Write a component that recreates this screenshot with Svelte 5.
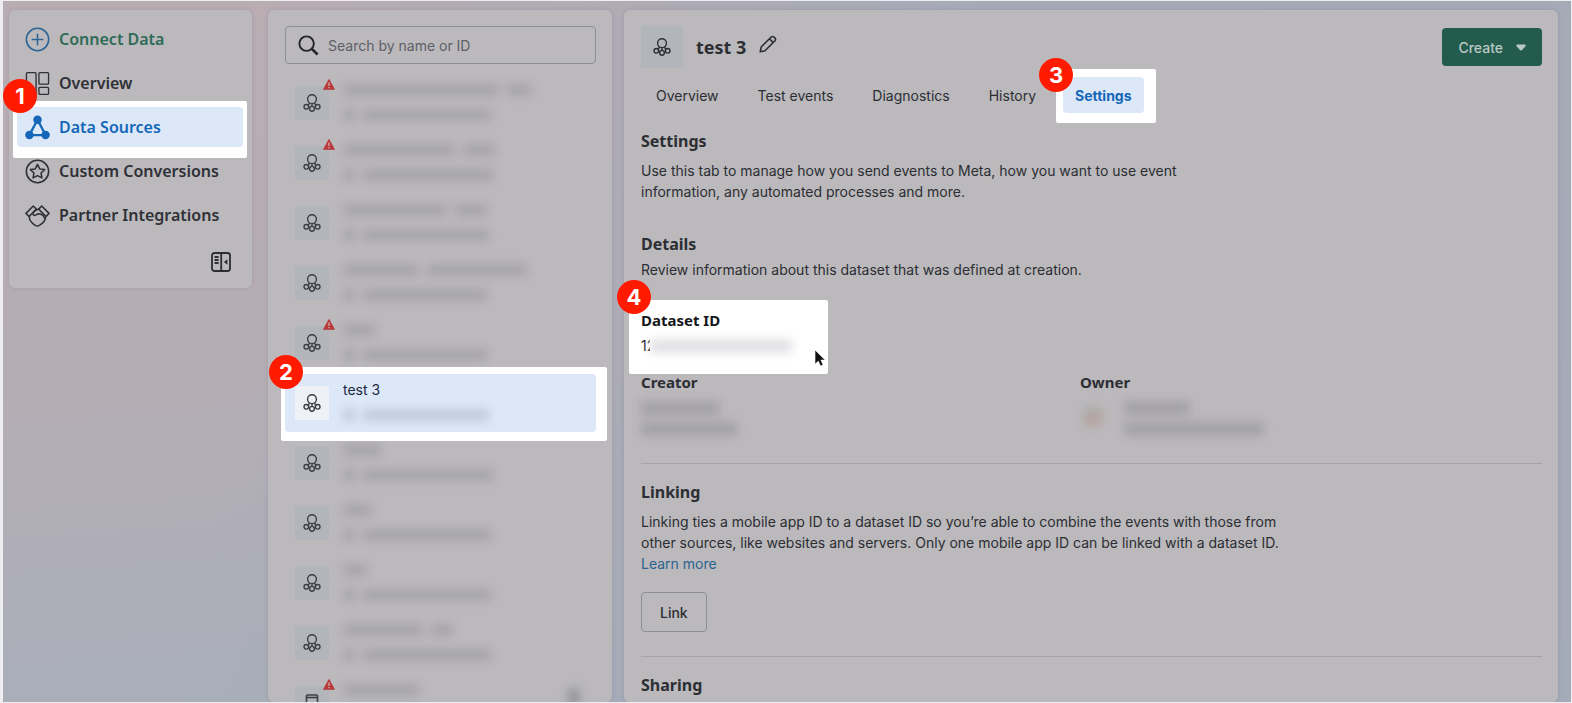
<script>
  let search = $state('');
  let activeTab = $state('Settings');
  let selected = $state(5);

  const tabs = ['Overview', 'Test events', 'Diagnostics', 'History', 'Settings'];

  // Redacted rows only keep the widths of their blurred parts
  const datasets = [
    { warning: true, name: [156, 24], id: [12, 128] },
    { warning: true, name: [112, 32], id: [12, 130] },
    { warning: false, name: [104, 32], id: [12, 126] },
    { warning: false, name: [76, 100], id: [12, 124] },
    { warning: true, name: [32], id: [12, 124] },
    { warning: false, title: 'test 3', id: [12, 126] },
    { warning: false, name: [38], id: [12, 130] },
    { warning: false, name: [28], id: [12, 128] },
    { warning: false, name: [24], id: [12, 128] },
    { warning: false, name: [80, 22], id: [12, 128] },
    { warning: true, app: true, name: [76], id: [12, 128] }
  ];
</script>

{#snippet datasetIcon()}
  <svg class="dataset-icon" viewBox="0 0 18 18" fill="none" stroke="currentColor" stroke-width="1.4">
    <circle cx="9" cy="5.2" r="4.4" />
    <circle cx="3.3" cy="12.8" r="2.3" />
    <circle cx="9" cy="14.8" r="2.4" />
    <circle cx="14.7" cy="12.8" r="2.3" />
    <path d="M6.4 8.8 5.400 11.600M11.600 8.800l1 2.800M9 9.600v2.800" />
  </svg>
{/snippet}

{#snippet blurred(widths)}
  <span class="blurred">
    {#each widths as width}
      <span class="smudge" style="width: {width}px"></span>
    {/each}
  </span>
{/snippet}

<div class="page">
  <nav class="panel sidebar">
    <a class="nav-item connect" href="#connect">
      <svg viewBox="0 0 26 26" fill="none" stroke="#2b6496" stroke-width="1.6">
        <circle cx="13" cy="13" r="11.6" />
        <path d="M13 7v12M7 13h12" />
      </svg>
      Connect Data
    </a>
    <a class="nav-item" href="#overview">
      <svg viewBox="0 0 26 26" fill="none" stroke="currentColor" stroke-width="1.4">
        <rect x="1.5" y="1.7" width="10" height="22.6" rx="1" />
        <rect x="14.5" y="1.7" width="10" height="12" rx="1" />
        <rect x="14.5" y="17" width="10" height="7.3" rx="1" />
      </svg>
      Overview
    </a>
    <a class="nav-item current spotlight" href="#data-sources">
      <span class="badge">1</span>
      <svg viewBox="0 0 26 26" fill="currentColor">
        <path d="M13 5 4.500 21h17z" fill="none" stroke="currentColor" stroke-width="2.400" />
        <circle cx="13" cy="5" r="4.400" />
        <circle cx="4.600" cy="20.800" r="4.400" />
        <circle cx="21.400" cy="20.800" r="4.400" />
      </svg>
      Data Sources
    </a>
    <a class="nav-item" href="#custom-conversions">
      <svg viewBox="0 0 26 26" fill="none" stroke="currentColor" stroke-width="1.6" stroke-linejoin="round">
        <circle cx="13" cy="13" r="11.6" />
        <path d="m13 5.600 2.300 4.700 5.100.7-3.700 3.600.9 5.100-4.600-2.400-4.600 2.400.9-5.100L5.600 11l5.100-.7z" />
      </svg>
      Custom Conversions
    </a>
    <a class="nav-item" href="#partner-integrations">
      <svg viewBox="0 0 26 26" fill="none" stroke="currentColor" stroke-width="1.6" stroke-linejoin="round" stroke-linecap="round">
        <path d="M1 10.800 8.600 3.200l3.200 3.200-7.600 7.600z" />
        <path d="M25 10.800 17.400 3.200l-3.200 3.200 7.600 7.600z" />
        <path d="M14.200 6.400c-2.400.2-4.400 1.400-5.800 3.800-.6 2 .8 3.200 2.600 2.400l2.600-1.400c3 0 5.600 1.600 6.600 4.400" />
        <path d="M4.600 14.200c-.4 3.600 2.200 6.600 6 9 1.400.9 3 .9 4.400 0 4-2.400 6.600-5.400 6.400-9.200" />
      </svg>
      Partner Integrations
    </a>
    <button class="collapse" aria-label="Collapse menu">
      <svg viewBox="0 0 20 20" fill="none" stroke="currentColor" stroke-width="1.8">
        <rect x="1" y="1" width="18" height="18" rx="2.500" />
        <path d="M10.200 1v18M3.600 5h4M3.600 8h4M3.600 11h4" />
        <path d="M16.400 7.200v5.600L12.800 10z" fill="currentColor" stroke="none" />
      </svg>
    </button>
  </nav>

  <section class="panel datasets">
    <label class="search">
      <svg viewBox="0 0 22 22" fill="none" stroke="currentColor" stroke-width="2">
        <circle cx="9" cy="9" r="7.600" />
        <path d="m14.500 14.500 6 6" stroke-width="2.800" />
      </svg>
      <input type="text" placeholder="Search by name or ID" aria-label="Search by name or ID" bind:value={search} />
    </label>

    <div class="rows">
      {#each datasets as dataset, i}
        <button
          class="row {selected === i ? 'selected' : ''} {i === 5 ? 'spotlight' : ''}"
          aria-label={dataset.title ?? 'Dataset'}
          onclick={() => (selected = i)}
        >
          {#if i === 5}
            <span class="badge">2</span>
          {/if}
          <span class="tile">
            {#if dataset.app}
              <svg class="dataset-icon" viewBox="0 0 18 18" fill="none" stroke="currentColor" stroke-width="1.6">
                <rect x="3.500" y="1" width="11" height="16" rx="1" />
                <path d="M3.500 3.500h11" />
              </svg>
            {:else}
              {@render datasetIcon()}
            {/if}
            {#if dataset.warning}
              <svg class="warning" viewBox="0 0 12 11">
                <path d="M6 .8 11.200 10.200H.8z" fill="#b93a3c" stroke="#b93a3c" stroke-width="1.200" stroke-linejoin="round" />
                <path d="M6 3.600v3.400M6 8v1.200" stroke="#d8b4b5" stroke-width="1.200" />
              </svg>
            {/if}
          </span>
          <span class="row-text">
            {#if dataset.title}
              <span class="row-title">{dataset.title}</span>
            {:else}
              {@render blurred(dataset.name)}
            {/if}
            {@render blurred(dataset.id)}
          </span>
          {#if dataset.app}
            <span class="row-extra"></span>
          {/if}
        </button>
      {/each}
    </div>
  </section>

  <main class="panel main">
    <header class="header">
      <span class="tile large">{@render datasetIcon()}</span>
      <h1>test 3</h1>
      <button class="edit" aria-label="Edit name">
        <svg viewBox="0 0 18 18" fill="none" stroke="currentColor" stroke-width="1.6" stroke-linejoin="round">
          <path d="M1.200 16.800 2.200 12 12.200 2a1.900 1.900 0 0 1 2.700 0l1.100 1.100a1.900 1.900 0 0 1 0 2.700L6 15.800z" />
          <path d="m10.400 3.800 3.800 3.800" />
        </svg>
      </button>
      <button class="create">
        Create
        <svg viewBox="0 0 10 7" fill="currentColor">
          <path d="M1.500.5h7c1.200 0 1.500 1.200.8 2L5.800 6.200a1.100 1.100 0 0 1-1.600 0L.7 2.500C0 1.700.3.500 1.500.5z" />
        </svg>
      </button>
    </header>

    <nav class="tabs">
      {#each tabs as tab}
        <button
          class="tab {activeTab === tab ? 'active' : ''} {tab === 'Settings' ? 'spotlight' : ''}"
          onclick={() => (activeTab = tab)}
        >
          {#if tab === 'Settings'}
            <span class="badge">3</span>
          {/if}
          {tab}
        </button>
      {/each}
    </nav>

    <section class="intro">
      <h2>Settings</h2>
      <p>Use this tab to manage how you send events to Meta, how you want to use event information, any automated processes and more.</p>
    </section>

    <section class="details">
      <h2>Details</h2>
      <p>Review information about this dataset that was defined at creation.</p>

      <div class="dataset-id spotlight">
        <span class="badge">4</span>
        <h3>Dataset ID</h3>
        <div class="id-value">12<span class="id-cover"><span class="smudge"></span></span></div>
        <svg class="cursor" viewBox="0 0 12 18">
          <path d="M1 1v14.200l3.300-3.100 2.200 4.900 2.600-1.200-2.200-4.700h4.300z" fill="#111" stroke="#fff" stroke-width=".6" />
        </svg>
      </div>

      <div class="people">
        <div>
          <h3>Creator</h3>
          <div class="person-lines">
            {@render blurred([78])}
            {@render blurred([96])}
          </div>
        </div>
        <div>
          <h3>Owner</h3>
          <div class="owner">
            <span class="avatar"></span>
            <div class="person-lines">
              {@render blurred([66])}
              {@render blurred([140])}
            </div>
          </div>
        </div>
      </div>
    </section>

    <section class="divided">
      <h2>Linking</h2>
      <p>
        Linking ties a mobile app ID to a dataset ID so you’re able to combine the events with those from other
        sources, like websites and servers. Only one mobile app ID can be linked with a dataset ID.
        <a href="#learn-more">Learn more</a>
      </p>
      <button class="link-button">Link</button>
    </section>

    <section class="divided">
      <h2>Sharing</h2>
    </section>
  </main>
</div>

<style>
  :global(body) {
    margin: 0;
    background: #eeedf2;
  }

  .page {
    box-sizing: border-box;
    display: flex;
    align-items: stretch;
    height: calc(100vh - 2px);
    margin: 1px 1px 1px 3px;
    padding: 9px 13px 0 6px;
    overflow: hidden;
    background:
      linear-gradient(96deg, rgba(164, 170, 184, 0) 16%, rgba(164, 170, 184, 0.9) 60%),
      linear-gradient(176deg, #b9adb2 0%, #b5adb4 48%, #adaeb8 74%, #a5aeb8 100%);
    color: #2c2e33;
    font-family: Inter, "Liberation Sans", sans-serif;
    font-size: 14px;
    line-height: 21px;
  }

  .panel {
    box-sizing: border-box;
    background: #bbb9bc;
    border-radius: 6px;
    box-shadow: 0 0 4px rgba(90, 90, 110, 0.2);
  }

  button {
    margin: 0;
    padding: 0;
    border: 0;
    background: none;
    color: inherit;
    font: inherit;
    text-align: left;
    cursor: pointer;
  }

  h1,
  h2,
  h3,
  p {
    margin: 0;
  }

  h1,
  h2,
  h3,
  .nav-item {
    font-family: "Noto Sans", "Open Sans", sans-serif;
  }

  /* Spotlight boxes and step numbers */
  .spotlight {
    position: relative;
    z-index: 1;
    isolation: isolate;
  }

  .spotlight::before,
  .spotlight::after {
    content: "";
    position: absolute;
    border-radius: 2px;
  }

  .spotlight::before {
    z-index: -2;
    background: #fff;
  }

  .spotlight::after {
    z-index: -1;
    inset: 0;
    border-radius: 4px;
    background: #dce7f8;
  }

  .badge {
    position: absolute;
    display: flex;
    align-items: center;
    justify-content: center;
    width: 34px;
    height: 34px;
    border-radius: 50%;
    background: #ff1a00;
    color: #fff;
    font-family: Inter, sans-serif;
    font-size: 22px;
    font-weight: 700;
  }

  /* Sidebar */
  .sidebar {
    display: flex;
    flex-direction: column;
    gap: 4px;
    flex: none;
    align-self: flex-start;
    width: 243px;
    padding: 9px 9px 16px 8px;
  }

  .nav-item {
    display: flex;
    align-items: center;
    gap: 9px;
    height: 40px;
    padding: 0 8px;
    border-radius: 4px;
    color: #2f3136;
    font-size: 16px;
    font-weight: 600;
    text-decoration: none;
    white-space: nowrap;
  }

  .nav-item svg {
    flex: none;
    width: 25px;
    height: 25px;
  }

  .nav-item.connect {
    color: #2f6b59;
  }

  .nav-item.current {
    color: #1467b8;
  }

  .nav-item.spotlight::before {
    inset: -6px -4px -11px;
  }

  .nav-item .badge {
    top: -28px;
    left: -14px;
  }

  .collapse {
    align-self: flex-end;
    width: 20px;
    height: 20px;
    margin: 13px 12px 0 0;
  }

  .collapse svg {
    display: block;
  }

  /* Dataset list */
  .datasets {
    flex: none;
    width: 344px;
    margin: 0 12px 0 16px;
    padding: 16px 16px 0 17px;
  }

  .search {
    box-sizing: border-box;
    display: flex;
    align-items: center;
    gap: 9px;
    height: 38px;
    padding: 0 12px;
    border: 1px solid #8b8f96;
    border-radius: 4px;
    color: #24262a;
  }

  .search svg {
    flex: none;
    width: 21px;
    height: 21px;
  }

  .search input {
    flex: 1;
    min-width: 0;
    padding: 0;
    border: 0;
    outline: 0;
    background: none;
    color: inherit;
    font: inherit;
  }

  .search input::placeholder {
    color: #5d6067;
    opacity: 1;
  }

  .rows {
    display: flex;
    flex-direction: column;
    gap: 2px;
    margin-top: 10px;
  }

  .row {
    box-sizing: border-box;
    display: flex;
    align-items: center;
    gap: 14px;
    height: 58px;
    padding: 0 16px 0 10px;
    color: #3c3e43;
  }

  .row.selected {
    color: #1d2a3f;
  }

  .row.spotlight::before {
    inset: -7px -11px -9px -4px;
  }

  .row:not(.selected)::after {
    background: none;
  }

  .row .badge {
    top: -19px;
    left: -16px;
  }

  .row.selected .tile {
    background: #eef2f8;
    color: #3c3e43;
  }

  .tile {
    position: relative;
    display: flex;
    align-items: center;
    justify-content: center;
    flex: none;
    width: 34px;
    height: 34px;
    background: #b2b5ba;
  }

  .tile.large {
    width: 42px;
    height: 42px;
  }

  .dataset-icon {
    width: 18px;
    height: 18px;
  }

  .warning {
    position: absolute;
    top: -7px;
    right: -6px;
    width: 12px;
    height: 11px;
  }

  .row-text {
    display: flex;
    flex-direction: column;
    gap: 4px;
    flex: 1;
    padding-bottom: 2px;
  }

  .row-title {
    line-height: 21px;
  }

  .row-extra {
    align-self: flex-start;
    width: 12px;
    height: 20px;
    margin-top: 14px;
    background: #96979b;
    filter: blur(5px);
  }

  .blurred {
    display: flex;
    align-items: center;
    gap: 8px;
    height: 21px;
    filter: blur(5px);
  }

  .smudge {
    height: 12px;
    background: rgba(80, 80, 88, 0.18);
  }

  /* Main panel */
  .main {
    flex: 1;
    min-width: 0;
    padding: 16px 16px 0 17px;
  }

  .header {
    display: flex;
    align-items: center;
    height: 42px;
  }

  .header h1 {
    margin-left: 13px;
    font-size: 18px;
    font-weight: 700;
  }

  .edit {
    width: 18px;
    height: 18px;
    margin: 0 auto 6px 13px;
  }

  .edit svg {
    display: block;
  }

  .create {
    display: flex;
    align-items: center;
    gap: 13px;
    height: 38px;
    padding: 0 16px;
    border-radius: 4px;
    background: #235c4c;
    color: #b9c9c5;
    font-weight: 500;
  }

  .create svg {
    width: 10px;
    height: 7px;
  }

  .tabs {
    display: flex;
    gap: 15px;
    margin: 9px 0 17px 3px;
  }

  .tab {
    height: 36px;
    padding: 0 12px;
    white-space: nowrap;
  }

  .tab.active {
    color: #1467b8;
    font-weight: 700;
  }

  .tab.spotlight::before {
    inset: -8px -12px -10px -7px;
  }

  .tab:not(.active)::after {
    background: none;
  }

  .tab .badge {
    top: -19px;
    left: -24px;
  }

  h2 {
    font-size: 16px;
    font-weight: 700;
    line-height: 22px;
  }

  h3 {
    font-size: 15px;
    font-weight: 700;
    line-height: 20px;
  }

  p {
    max-width: 660px;
  }

  .intro p {
    max-width: 560px;
    margin-top: 8px;
  }

  .details {
    margin-top: 31px;
  }

  .details p {
    margin-top: 4px;
  }

  .dataset-id {
    width: 175px;
    margin-top: 30px;
    color: #15171b;
  }

  .dataset-id::before {
    inset: -10px -12px -18px;
  }

  .dataset-id::after {
    background: none;
  }

  .dataset-id .badge {
    top: -30px;
    left: -24px;
  }

  .id-value {
    display: flex;
    margin-top: 5px;
  }

  .id-cover {
    display: flex;
    align-items: center;
    width: 142px;
    margin-left: -5px;
    background: #fff;
  }

  .id-cover .smudge {
    flex: 1;
    height: 14px;
    background: #e2e2e6;
    filter: blur(5px);
  }

  .cursor {
    position: absolute;
    right: -10px;
    bottom: -11px;
    width: 12px;
    height: 18px;
  }

  .people {
    display: grid;
    grid-template-columns: 439px 1fr;
    margin: 16px 0 24px;
  }

  .person-lines {
    margin-top: 5px;
  }

  .person-lines .smudge {
    height: 14px;
    background: rgba(80, 80, 88, 0.22);
  }

  .owner {
    display: flex;
    gap: 20px;
  }

  .avatar {
    width: 22px;
    height: 22px;
    margin: 14px 0 0 2px;
    border-radius: 50%;
    background: linear-gradient(160deg, #a8b0ae, #b3a3a2 60%, #c0b0a4);
    filter: blur(4px);
  }

  .divided {
    padding: 17px 0 24px;
    border-top: 1px solid #a3a3a8;
  }

  .divided p {
    margin-top: 8px;
  }

  .divided a {
    color: #2b6490;
    text-decoration: none;
  }

  .link-button {
    height: 40px;
    margin-top: 18px;
    padding: 0 18px;
    border: 1px solid #8b8f96;
    border-radius: 4px;
    font-weight: 500;
  }
</style>
